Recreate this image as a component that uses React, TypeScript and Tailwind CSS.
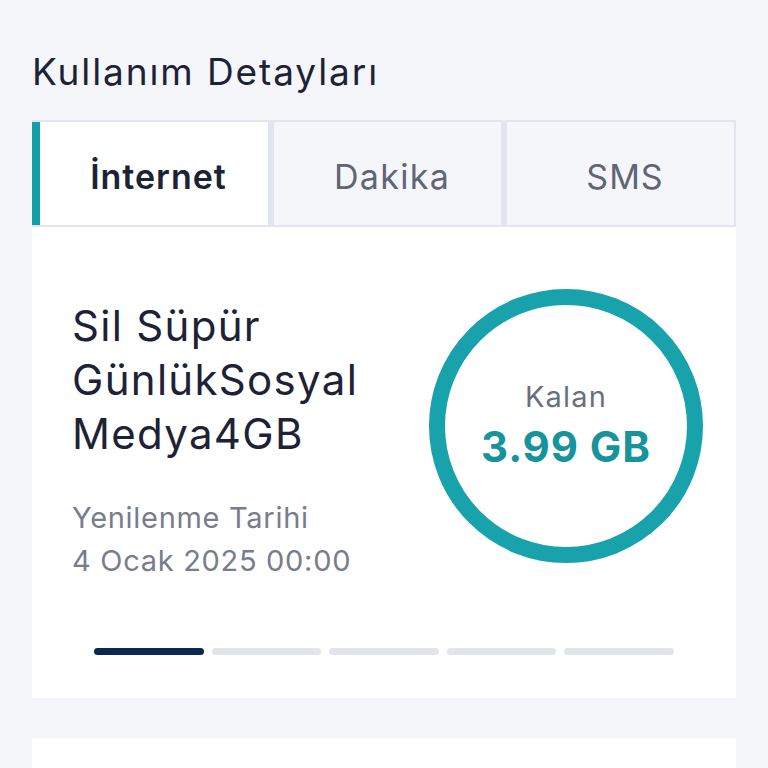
import React from "react";

export default function App() {
  const font = { fontFamily: "Inter, 'Noto Sans', sans-serif" };
  return (
    <div className="min-h-[768px] w-[768px] bg-[#f5f6f9] px-8 pt-[46px] overflow-hidden" style={font}>
      <h1 className="text-[37px] leading-[52px] tracking-[1.9px] text-[#1d2236] font-normal">Kullanım Detayları</h1>
      <div className="mt-[22px] flex h-[107px] border-y-2 border-r-2 border-[#e3e5ee] bg-[#e3e5ee] gap-[6px]">
        <div className="flex w-[236px] shrink-0">
          <div className="w-[8px] bg-[#139ea8]" />
          <div className="flex flex-1 items-center justify-center bg-white pt-[5px] pl-[9px] text-[34px] tracking-[1px] font-semibold text-[#1d2236]">İnternet</div>
        </div>
        <div className="flex flex-1 items-center justify-center bg-[#f5f6f9] pt-[5px] pl-[9px] text-[34px] tracking-[1.3px] text-[#5f6577]">Dakika</div>
        <div className="flex flex-1 items-center justify-center bg-[#f5f6f9] pt-[5px] pl-[9px] text-[34px] tracking-[1px] text-[#5f6577]">SMS</div>
      </div>
      <div className="bg-white h-[471px] px-[40px] pt-[62px]">
        <div className="flex justify-between">
          <div className="pt-[10px]">
            <div className="text-[42px] leading-[54px] tracking-[1.3px] text-[#1d2236]">
              Sil Süpür
              <br />
              GünlükSosyal
              <br />
              Medya4GB
            </div>
            <div className="mt-[35px] text-[29px] leading-[43px] tracking-[0.7px] text-[#787d8c]">
              Yenilenme Tarihi
              <br />4 Ocak 2025 00:00
            </div>
          </div>
          <div className="relative mr-[-7px] h-[274px] w-[274px] shrink-0">
            <svg width="274" height="274" viewBox="0 0 274 274" className="absolute inset-0">
              <circle cx="137" cy="137" r="129" fill="none" stroke="#17a2ac" strokeWidth="16" />
            </svg>
            <div className="absolute inset-0 flex flex-col items-center justify-center pb-[2px]">
              <div className="text-[29px] leading-[36px] tracking-[1.2px] text-[#6a6f7f]">Kalan</div>
              <div className="mt-[7px] text-[42px] leading-[50px] tracking-[0.9px] font-bold text-[#17939c]">3.99 GB</div>
            </div>
          </div>
        </div>
        <div className="mt-[66px] flex gap-[8px] px-[22px]">
          <div className="h-[7px] flex-1 rounded-full bg-[#0b2752]" />
          <div className="h-[7px] flex-1 rounded-full bg-[#e2e4ec]" />
          <div className="h-[7px] flex-1 rounded-full bg-[#e2e4ec]" />
          <div className="h-[7px] flex-1 rounded-full bg-[#e2e4ec]" />
          <div className="h-[7px] flex-1 rounded-full bg-[#e2e4ec]" />
        </div>
      </div>
      <div className="mt-[40px] h-[100px] bg-white" />
    </div>
  );
}
